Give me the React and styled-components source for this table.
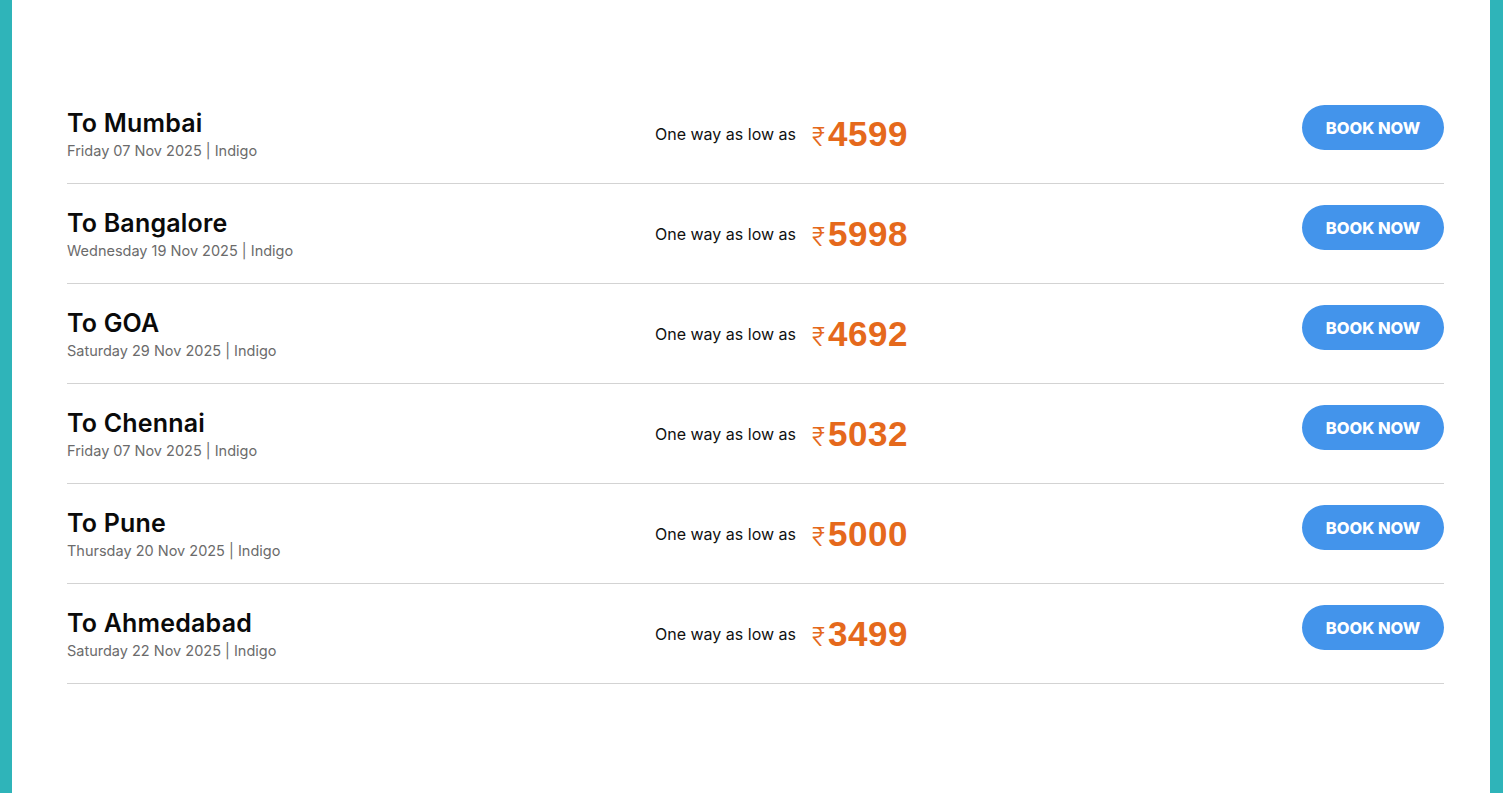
import React from "react";
import styled, { createGlobalStyle } from "styled-components";

const GlobalStyle = createGlobalStyle`
	html, body {
		margin: 0;
		padding: 0;
		background: #2fb4b9;
	}
	body {
		font-family: "Inter", "Noto Sans", sans-serif;
	}
`;

const flights = [
	{ city: "Mumbai", date: "Friday 07 Nov 2025", price: "4599" },
	{ city: "Bangalore", date: "Wednesday 19 Nov 2025", price: "5998" },
	{ city: "GOA", date: "Saturday 29 Nov 2025", price: "4692" },
	{ city: "Chennai", date: "Friday 07 Nov 2025", price: "5032" },
	{ city: "Pune", date: "Thursday 20 Nov 2025", price: "5000" },
	{ city: "Ahmedabad", date: "Saturday 22 Nov 2025", price: "3499" },
];

function App() {
	return (
		<>
			<GlobalStyle />
			<Panel>
				<List>
					{flights.map((f) => (
						<Row key={f.city}>
							<div className="info">
								<h3>To {f.city}</h3>
								<p>
									{f.date} | Indigo
								</p>
							</div>
							<Fare>
								<span className="label">One way as low as</span>
								<span className="rupee">₹</span>
								<span className="amount">{f.price}</span>
							</Fare>
							<BookButton>BOOK NOW</BookButton>
						</Row>
					))}
				</List>
			</Panel>
		</>
	);
}

export default App;

const Panel = styled.div`
	background: #fff;
	margin: 0 13px 0 12px;
	height: 793px;
	padding: 84px 46px 0 55px;
	box-sizing: border-box;
`;

const List = styled.div`
	display: flex;
	flex-direction: column;
`;

const Row = styled.div`
	display: grid;
	grid-template-columns: 588px auto 1fr;
	align-items: center;
	height: 100px;
	box-sizing: border-box;
	border-bottom: 1px solid #d3d3d3;
	.info {
		align-self: start;
		padding-top: 23px;
		h3 {
			margin: 0;
			font-size: 25px;
			font-weight: 600;
			line-height: 32px;
			color: #0a0a0a;
			letter-spacing: 0.2px;
		}
		p {
			margin: 2px 0 0;
			font-size: 14.5px;
			line-height: 20px;
			color: #6b6b6b;
		}
	}
`;

const Fare = styled.div`
	display: flex;
	align-items: center;
	.label {
		font-size: 16px;
		color: #111;
		margin-right: 16px;
	}
	.rupee {
		font-size: 25px;
		font-weight: 300;
		color: #e5691c;
		margin-right: 3px;
		padding-top: 6px;
	}
	.amount {
		font-family: "Liberation Sans", Arial, sans-serif;
		font-size: 35px;
		font-weight: 700;
		color: #e5691c;
		letter-spacing: 0.5px;
	}
`;

const BookButton = styled.button`
	justify-self: end;
	align-self: start;
	margin-top: 21px;
	width: 142px;
	height: 45px;
	border: none;
	border-radius: 23px;
	background: #4394eb;
	color: #fff;
	font-family: "Inter", sans-serif;
	font-size: 16.5px;
	font-weight: 800;
	cursor: pointer;
`;
